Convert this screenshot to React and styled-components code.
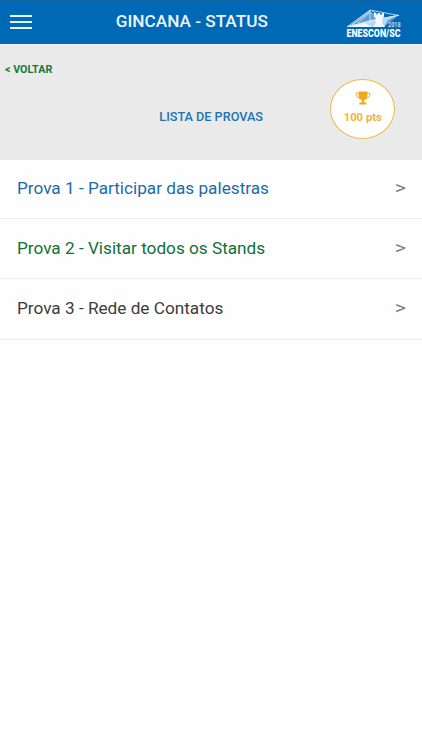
import * as React from "react";
import styled, { createGlobalStyle } from "styled-components";

// *** data
const PROVAS = [
  { id: 1, title: "Prova 1 - Participar das palestras", color: "#1c6ba8" },
  { id: 2, title: "Prova 2 - Visitar todos os Stands", color: "#0f7038" },
  { id: 3, title: "Prova 3 - Rede de Contatos", color: "#3c3c3c" },
];

// *** styled components
const GlobalStyle = createGlobalStyle`
  * {
    box-sizing: border-box;
  }
  body {
    margin: 0;
    background: #fefefe;
    font-family: Roboto, "Liberation Sans", sans-serif;
  }
`;
const Page = styled.div`
  min-height: 100vh;
`;
// ? wide lettering used all over the app
const Label = styled.span`
  display: block;
  flex: none;
  width: fit-content;
  white-space: nowrap;
  font-size: ${(p) => p.$size}px;
  font-weight: ${(p) => p.$weight || 400};
  line-height: 1.2;
  color: ${(p) => p.$color};
  transform: scaleX(${(p) => p.$stretch || 1.074});
  transform-origin: ${(p) => p.$origin || "left"} center;
`;
const Header = styled.header`
  display: grid;
  grid-template-columns: 76px 1fr 76px;
  align-items: center;
  height: 44px;
  padding-left: 10px;
  background: #0069b5;
  border-top: 1px solid #1261a0;
`;
const MenuButton = styled.button`
  display: flex;
  flex-direction: column;
  gap: 4px;
  width: 22px;
  margin-bottom: 2px;
  padding: 0;
  border: 0;
  background: none;
`;
const MenuBar = styled.span`
  height: 2px;
  background: #e8f4fc;
`;
const HeaderTitle = styled.h1`
  display: flex;
  justify-content: center;
  margin: 0;
  padding: 0 48px 2px 0;
`;
const Logo = styled.svg`
  display: block;
  width: 56px;
  height: 30px;
  margin-top: 1px;
  overflow: visible;
`;
const Summary = styled.section`
  display: grid;
  grid-template-columns: 1fr auto 1fr;
  grid-template-rows: 34px 60px;
  height: 116px;
  background: #eaeaea;
  border-top: 1px solid #f0f3f5;
`;
const BackLink = styled.a`
  grid-column: 1 / -1;
  padding: 19px 5px 0;
`;
const ListTitle = styled.h2`
  grid-column: 2;
  align-self: center;
  margin: 17px 0 0;
`;
const Points = styled.div`
  display: flex;
  flex-direction: column;
  align-items: center;
  justify-self: end;
  width: 65px;
  height: 60px;
  margin-right: 27px;
  padding-top: 11px;
  border: 1px solid #eebb4c;
  border-radius: 50%;
  background: #fff;
`;
const Trophy = styled.svg`
  width: 16px;
  height: 14px;
  margin-bottom: 7px;
`;
const List = styled.ul`
  margin: 0;
  padding: 0;
  list-style: none;
`;
const Row = styled.li`
  display: flex;
  align-items: center;
  justify-content: space-between;
  height: 60.4px;
  padding: 0 16.5px 1px 17px;
  border-bottom: 1px solid #ededed;

  &:first-child {
    height: 59px;
  }
`;

// *** components
const EnesconLogo = () => (
  <Logo viewBox="0 0 56 30" aria-label="ENESCON/SC 2018">
    <path d="M1 19L24 2L30 11L53 7L38 19Z" fill="#5d9fd3" />
    <path d="M1 19L24 12L53 7L42 12L38 19Z" fill="#b9d7ef" />
    <path d="M1 19L18 14.5L26 19Z" fill="#f0f7fd" />
    <path
      d="M1 19L24 2L53 7.5M6 17L24 3M12 15L24 4M24 2V16M26 3L36 9M25 5L32 10M1 18.5L53 7"
      fill="none"
      stroke="#d9eaf8"
      strokeWidth="0.8"
    />
    <path
      d="M28 5h2v1.5h1.8V5h2.4v1.5H36V5h2v4l-1.5 1v6l2.5 3H27l2.5-3v-6L28 9z"
      fill="#f2f8fd"
    />
    <text x="42" y="18.5" fontSize="8" fill="#dcecf9" textLength="12.5" lengthAdjust="spacingAndGlyphs" fontWeight="500" fontFamily="Roboto">
      2018
    </text>
    <text x="0.5" y="28.5" fontSize="10" fill="#f5faff" textLength="54" lengthAdjust="spacingAndGlyphs" fontWeight="900" fontFamily="Roboto">
      ENESCON/SC
    </text>
  </Logo>
);

const TrophyIcon = () => (
  <Trophy viewBox="0 0 16 14" aria-hidden="true">
    <path
      d="M4 2.2H1.2C.6 5 2.2 7 5 7.4M12 2.2h2.8C15.4 5 13.8 7 11 7.4"
      fill="none"
      stroke="#efb02b"
      strokeWidth="1"
    />
    <path
      d="M3.6.4h8.8v3.8c0 2.6-1.2 4.2-3.2 5v2.3h1c.9 0 1.4.4 1.4 1v1.1H4.4v-1.1c0-.6.5-1 1.4-1h1V9.2c-2-.8-3.2-2.4-3.2-5z"
      fill="#efaa1c"
    />
  </Trophy>
);

const App = () => (
  <Page>
    <GlobalStyle />
    <Header>
      <MenuButton aria-label="Menu">
        <MenuBar />
        <MenuBar />
        <MenuBar />
      </MenuButton>
      <HeaderTitle>
        <Label $size={16} $weight={500} $color="#eaf5fd" $origin="center">
          GINCANA - STATUS
        </Label>
      </HeaderTitle>
      <EnesconLogo />
    </Header>
    <Summary>
      <BackLink>
        <Label $size={10} $weight={700} $color="#137a3c">
          &lt; VOLTAR
        </Label>
      </BackLink>
      <ListTitle>
        <Label $size={12} $weight={500} $color="#2273b3" $stretch={1.055} $origin="center">
          LISTA DE PROVAS
        </Label>
      </ListTitle>
      <Points>
        <TrophyIcon />
        <Label $size={10.5} $weight={700} $color="#efb53a" $origin="center">
          100 pts
        </Label>
      </Points>
    </Summary>
    <List>
      {PROVAS.map((prova) => (
        <Row key={prova.id}>
          <Label $size={16} $color={prova.color}>
            {prova.title}
          </Label>
          <Label $size={19} $color="#808080" $stretch={1.13} $origin="right">
            &gt;
          </Label>
        </Row>
      ))}
    </List>
  </Page>
);

export default App;
